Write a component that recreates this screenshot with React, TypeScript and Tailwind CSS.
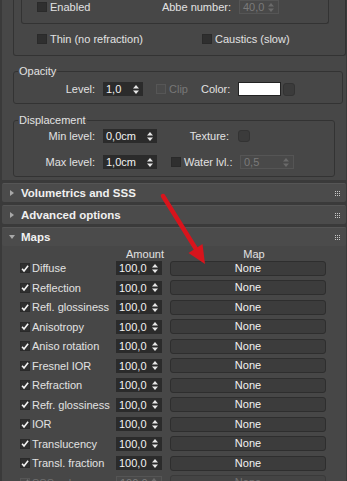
import React from "react";

const Arrows = ({ dim = false }: { dim?: boolean }) => (
  <svg width="6" height="9" viewBox="0 0 6 9" className="shrink-0">
    <polygon points="0,3.5 3,0 6,3.5" fill={dim ? "#6a6a6a" : "#e8e8e8"} />
    <polygon points="0,5.5 6,5.5 3,9" fill={dim ? "#6a6a6a" : "#e8e8e8"} />
  </svg>
);

const Spinner = ({ value, width, dim = false }: { value: string; width: string; dim?: boolean }) => (
  <div
    className={`${width} h-[14px] flex items-center justify-between pl-[3px] pr-[4px] shrink-0 ${
      dim ? "bg-[#494949] border border-[#555] text-[#7a7a7a]" : "bg-[#2b2b2b] text-[#f2f2f2]"
    }`}
  >
    <span className="leading-[14px]">{value}</span>
    <Arrows dim={dim} />
  </div>
);

const Check = ({ checked = false, disabled = false }: { checked?: boolean; disabled?: boolean }) => (
  <div
    className={`w-[10px] h-[10px] shrink-0 flex items-center justify-center border ${
      disabled ? "bg-[#4a4a4a] border-[#565656]" : "bg-[#2f2f2f] border-[#2a2a2a]"
    }`}
  >
    {checked && (
      <svg width="9" height="9" viewBox="0 0 9 9">
        <polyline points="1.2,4.8 3.4,7.3 8,1.5" fill="none" stroke={disabled ? "#777" : "#f4f4f4"} strokeWidth="1.8" />
      </svg>
    )}
  </div>
);

const Dots = () => (
  <div className="grid grid-cols-3 gap-[1px] w-[5px]">
    {Array.from({ length: 9 }).map((_, i) => (
      <div key={i} className="w-[1px] h-[1px] bg-[#c8c8c8]" />
    ))}
  </div>
);

const RolloutHeader = ({ title, open = false }: { title: string; open?: boolean }) => (
  <div className="h-[19px] flex items-center pl-[7px] pr-[6px] bg-[#4b4b4b] border-t border-[#555] rounded-[2px]">
    <svg width="6" height="6" viewBox="0 0 6 6" className="shrink-0">
      {open ? <polygon points="0,1 6,1 3,5" fill="#a8a8a8" /> : <polygon points="1,0 5,3 1,6" fill="#a8a8a8" />}
    </svg>
    <span className="ml-[6px] font-bold text-[11.5px] text-[#f0f0f0] leading-[19px]">{title}</span>
    <div className="ml-auto">
      <Dots />
    </div>
  </div>
);

const maps = [
  "Diffuse",
  "Reflection",
  "Refl. glossiness",
  "Anisotropy",
  "Aniso rotation",
  "Fresnel IOR",
  "Refraction",
  "Refr. glossiness",
  "IOR",
  "Translucency",
  "Transl. fraction",
];

export default function App() {
  return (
    <div className="relative w-[347px] h-[481px] overflow-hidden bg-[#3a3a3a] font-['Liberation_Sans',Arial,sans-serif] text-[11px] text-[#e2e2e2]">
      {/* previous rollout body */}
      <div className="ml-[2px] w-[344px] h-[180px] bg-[#474747]">
        <div className="ml-[11px] w-[333px] h-[56px] border-x border-b border-[#333] rounded-b-[3px]">
          <div className="ml-[7px] w-[308px] h-[24px] border-x border-b border-[#333] rounded-b-[3px] flex items-center pl-[15px] pb-[9px]">
            <Check />
            <span className="ml-[3px] w-[60px] leading-[14px]">Enabled</span>
            <span className="w-[121px] text-right leading-[14px]">Abbe number:</span>
            <div className="ml-[8px]">
              <Spinner value="40,0" width="w-[40px]" dim />
            </div>
          </div>
          <div className="mt-[8px] h-[14px] flex items-center pl-[23px]">
            <Check />
            <span className="ml-[3px] w-[152px] leading-[14px]">Thin (no refraction)</span>
            <Check />
            <span className="ml-[3px] leading-[14px]">Caustics (slow)</span>
          </div>
        </div>

        <fieldset className="mt-[9px] ml-[11px] w-[330px] border border-[#333] rounded-[3px] pb-[7px]">
          <legend className="ml-[4px] px-[1px] leading-[13px]">Opacity</legend>
          <div className="mt-[4px] h-[14px] flex items-center">
            <span className="w-[81px] text-right leading-[14px]">Level:</span>
            <div className="ml-[8px]">
              <Spinner value="1,0" width="w-[40px]" />
            </div>
            <div className="ml-[13px]">
              <Check disabled />
            </div>
            <span className="ml-[3px] w-[32px] text-[#777] leading-[14px]">Clip</span>
            <span className="w-[37px] leading-[14px]">Color:</span>
            <div className="w-[43px] h-[14px] bg-white border border-[#222]" />
            <div className="ml-[2px] w-[12px] h-[13px] rounded-[3px] bg-[#3b3b3b] border border-[#333]" />
          </div>
        </fieldset>

        <fieldset className="mt-[10px] ml-[11px] w-[322px] border border-[#333] rounded-[3px] pb-[7px]">
          <legend className="ml-[4px] px-[1px] leading-[13px]">Displacement</legend>
          <div className="mt-[2px] h-[14px] flex items-center">
            <span className="w-[81px] text-right leading-[14px]">Min level:</span>
            <div className="ml-[8px]">
              <Spinner value="0,0cm" width="w-[54px]" />
            </div>
            <span className="w-[72px] text-right leading-[14px]">Texture:</span>
            <div className="ml-[9px] w-[12px] h-[12px] rounded-[3px] bg-[#3b3b3b] border border-[#333]" />
          </div>
          <div className="mt-[12px] h-[14px] flex items-center">
            <span className="w-[81px] text-right leading-[14px]">Max level:</span>
            <div className="ml-[8px]">
              <Spinner value="1,0cm" width="w-[54px]" />
            </div>
            <div className="ml-[14px]">
              <Check />
            </div>
            <span className="ml-[3px] w-[56px] leading-[14px]">Water lvl.:</span>
            <Spinner value="0,5" width="w-[54px]" dim />
          </div>
        </fieldset>
      </div>

      {/* collapsed rollouts */}
      <div className="ml-[2px] w-[344px] mt-[3px]">
        <RolloutHeader title="Volumetrics and SSS" />
      </div>
      <div className="ml-[2px] w-[344px] mt-[3px]">
        <RolloutHeader title="Advanced options" />
      </div>

      {/* maps rollout */}
      <div className="ml-[2px] w-[344px] mt-[3px] bg-[#474747]">
        <RolloutHeader title="Maps" open />
        <div className="h-[12.25px] flex">
          <span className="ml-[114px] w-[58px] text-center leading-[16px]">Amount</span>
          <span className="ml-[10px] w-[140px] text-center leading-[16px]">Map</span>
        </div>
        {maps.map((name) => (
          <div key={name} className="h-[19.5px] flex items-center pl-[18px]">
            <Check checked />
            <span className="ml-[2px] w-[84px] leading-[14px] whitespace-nowrap">{name}</span>
            <Spinner value="100,0" width="w-[46px]" />
            <div className="ml-[8px] w-[156px] h-[15px] rounded-[3px] bg-[#3c3c3c] border border-[#2e2e2e] flex items-center justify-center text-[#f2f2f2] leading-[13px]">
              None
            </div>
          </div>
        ))}
        <div className="h-[19.5px] flex items-center pl-[18px] text-[#707070]">
          <Check checked disabled />
          <span className="ml-[2px] w-[84px] leading-[14px]">SSS color</span>
          <Spinner value="100,0" width="w-[46px]" dim />
          <div className="ml-[8px] w-[156px] h-[15px] rounded-[3px] bg-[#444] border border-[#3a3a3a] flex items-center justify-center leading-[13px]">
            None
          </div>
        </div>
      </div>

      {/* red annotation arrow */}
      <svg className="absolute left-0 top-0 pointer-events-none" width="347" height="481" viewBox="0 0 347 481">
        <line x1="163" y1="196" x2="196" y2="249" stroke="#d8141c" strokeWidth="4.5" strokeLinecap="round" />
        <polygon points="205,264 188.5,253 202.5,244" fill="#d8141c" />
      </svg>
    </div>
  );
}
